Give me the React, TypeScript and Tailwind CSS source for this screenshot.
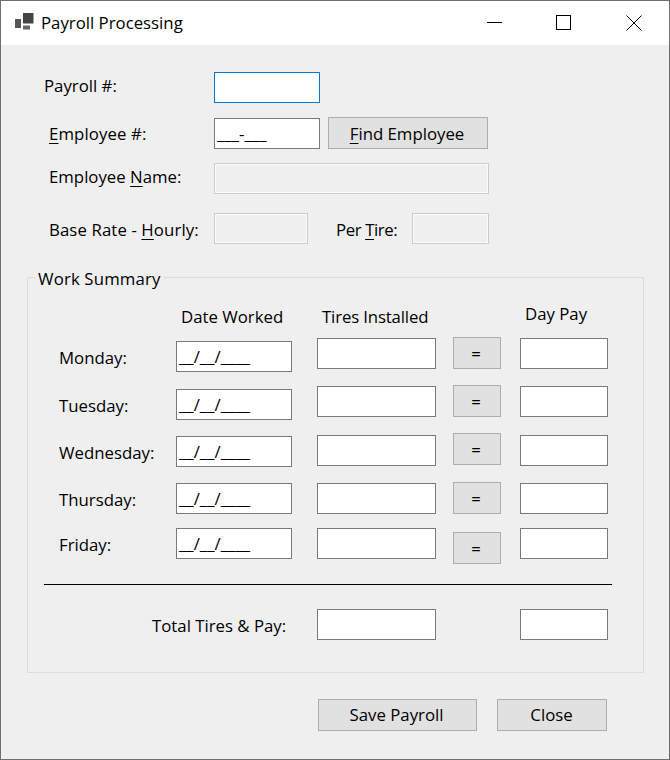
import type { ReactNode } from 'react';

const field = 'h-[31px] shrink-0 border border-[#7a7a7a] bg-white';
const disabledField = 'h-[31px] shrink-0 border border-[#cccccc] bg-[#efefef] shadow-[inset_0_0_0_1px_#fbfbfb]';
const winButton =
  'flex shrink-0 items-center justify-center border border-[#adadad] bg-[#e1e1e1] text-black';

function Mnemonic({ children }: { children: ReactNode }) {
  return <span className="underline underline-offset-[3px]">{children}</span>;
}

function MaskedInput({ mask, className }: { mask: string; className: string }) {
  return (
    <div className={`${field} ${className} flex items-center overflow-hidden pl-[2px] leading-none`}>
      <span className="mt-[2px]">{mask}</span>
    </div>
  );
}

const days = [
  { label: 'Monday:', labelTop: 'mt-[9px]', dateTop: 'mt-[3px]', btnTop: 'mt-[-1px]', rowH: 'h-[48px]' },
  { label: 'Tuesday:', labelTop: 'mt-[9px]', dateTop: 'mt-[3px]', btnTop: 'mt-[-1px]', rowH: 'h-[49px]' },
  { label: 'Wednesday:', labelTop: 'mt-[7px]', dateTop: 'mt-[1px]', btnTop: 'mt-[-2px]', rowH: 'h-[48px]' },
  { label: 'Thursday:', labelTop: 'mt-[6px]', dateTop: 'mt-[0px]', btnTop: 'mt-[-1px]', rowH: 'h-[45px]' },
  { label: 'Friday:', labelTop: 'mt-[6px]', dateTop: 'mt-[0px]', btnTop: 'mt-[4px]', rowH: 'h-[36px]' },
];

export default function App() {
  return (
    <div className="flex h-[760px] w-[670px] flex-col overflow-hidden border border-[#6f6f6f] bg-[#efefef] font-['Open_Sans','Noto_Sans',sans-serif] text-[16.8px] text-black">
      <div className="flex h-[44px] shrink-0 items-center bg-white">
        <svg className="ml-[14px] h-[20px] w-[20px]" viewBox="0 0 20 20" fill="#444">
          <rect x="8" y="0" width="10.5" height="10.5" />
          <rect x="0" y="6" width="6" height="9" fill="#555" />
          <rect x="8" y="12.5" width="7" height="4" fill="#666" />
        </svg>
        <span className="ml-[6px]">Payroll Processing</span>
        <div className="ml-auto flex items-center">
          <svg className="mr-[53px] h-[16px] w-[16px]" viewBox="0 0 16 16" stroke="#000" fill="none">
            <path d="M0 7.5H15" />
          </svg>
          <svg className="mr-[54px] h-[16px] w-[16px]" viewBox="0 0 16 16" stroke="#000" fill="none">
            <rect x="0.5" y="0.5" width="14" height="14" />
          </svg>
          <svg className="mr-[27px] h-[16px] w-[16px]" viewBox="0 0 16 16" stroke="#000" fill="none">
            <path d="M0.5 0.5L15.5 15.5M15.5 0.5L0.5 15.5" />
          </svg>
        </div>
      </div>

      <div className="flex flex-col pl-[43px] pt-[27px]">
        <div className="flex h-[31px] items-center">
          <span className="mt-[-3px] w-[170px] shrink-0">Payroll #:</span>
          <div className="h-[31px] w-[106px] border border-[#0078d7] bg-white" />
        </div>

        <div className="mt-[15px] flex h-[31px] items-center pl-[5px]">
          <span className="mt-[1px] w-[165px] shrink-0 tracking-[0.1px]">
            <Mnemonic>E</Mnemonic>mployee #:
          </span>
          <MaskedInput mask="___-___" className="w-[106px]" />
          <div className={`${winButton} ml-[8px] mt-[-1px] h-[32px] w-[160px]`}>
            <span className="mr-[2px] mt-[1px]">
              <Mnemonic>F</Mnemonic>ind Employee
            </span>
          </div>
        </div>

        <div className="mt-[14px] flex h-[31px] items-center pl-[5px]">
          <span className="mt-[-4px] w-[165px] shrink-0">
            Employee <Mnemonic>N</Mnemonic>ame:
          </span>
          <div className={`${disabledField} w-[275px]`} />
        </div>

        <div className="mt-[19px] flex h-[31px] items-center pl-[5px]">
          <span className="mt-[2px] w-[165px] shrink-0 tracking-[0.1px]">
            Base Rate - <Mnemonic>H</Mnemonic>ourly:
          </span>
          <div className={`${disabledField} w-[94px]`} />
          <span className="ml-[28px] mt-[2px] w-[76px] shrink-0 tracking-[-0.4px]">
            Per <Mnemonic>T</Mnemonic>ire:
          </span>
          <div className={`${disabledField} w-[77px]`} />
        </div>
      </div>

      {/* Work Summary group */}
      <div className="relative ml-[26px] mt-[33px] flex h-[396px] w-[617px] shrink-0 flex-col border border-[#dcdcdc]">
        <span className="absolute left-[8px] top-[-10px] bg-[#efefef] px-[2px] leading-[22px] tracking-[0.15px]">
          Work Summary
        </span>

        <div className="flex h-[50px] shrink-0 items-end leading-[22px]">
          <span className="ml-[153px] w-[141px] shrink-0">Date Worked</span>
          <span className="w-[203px] shrink-0 tracking-[-0.15px]">Tires Installed</span>
          <span className="mb-[3px]">Day Pay</span>
        </div>

        <div className="mt-[10px] flex flex-col">
          {days.map((d) => (
            <div key={d.label} className={`flex ${d.rowH} shrink-0 items-start`}>
              <span className={`ml-[31px] w-[117px] shrink-0 leading-[22px] ${d.labelTop}`}>{d.label}</span>
              <MaskedInput mask="__/__/____" className={`w-[116px] ${d.dateTop}`} />
              <div className={`${field} ml-[25px] w-[119px]`} />
              <div className={`${winButton} ml-[17px] h-[32px] w-[48px] pr-[2px] pt-[2px] ${d.btnTop}`}>=</div>
              <div className={`${field} ml-[19px] w-[88px]`} />
            </div>
          ))}
        </div>

        <div className="ml-[16px] mt-[20px] h-px w-[568px] bg-black" />

        <div className="mt-[24px] flex items-center">
          <span className="ml-[124px] mt-[2px] w-[165px] shrink-0">Total Tires &amp; Pay:</span>
          <div className={`${field} w-[119px]`} />
          <div className={`${field} ml-[84px] w-[88px]`} />
        </div>
      </div>

      <div className="mt-[26px] flex pl-[317px]">
        <div className={`${winButton} h-[32px] w-[159px] pr-[2px]`}>Save Payroll</div>
        <div className={`${winButton} ml-[20px] h-[32px] w-[110px] pr-[1px]`}>Close</div>
      </div>
    </div>
  );
}
